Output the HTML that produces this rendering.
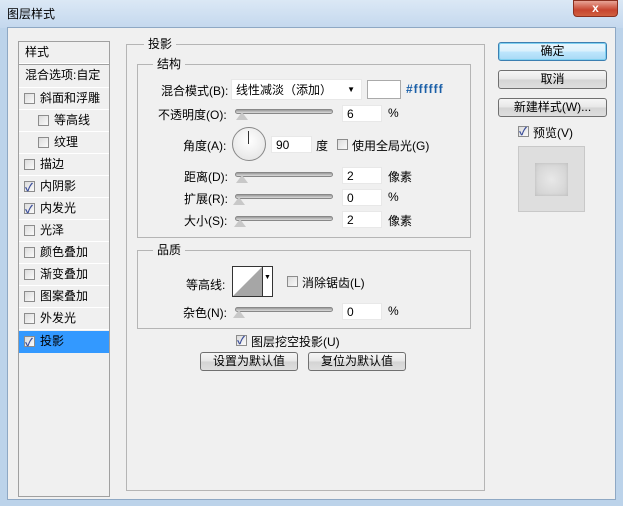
<!DOCTYPE html><html><head><meta charset="utf-8"><style>
*{margin:0;padding:0;box-sizing:border-box}
body{width:623px;height:506px;overflow:hidden;background:#bcd3ea;font-family:"Liberation Sans","Noto Sans CJK SC","WenQuanYi Zen Hei",sans-serif;font-size:12px;color:#000;position:relative}
.a{position:absolute;white-space:nowrap}
.title{left:0;top:0;width:623px;height:28px;background:linear-gradient(#dbe8f5,#c4d8ee)}
.body{left:7px;top:27px;width:609px;height:473px;background:#f0f0f0;border:1px solid #8ea8c4}
.list{left:18px;top:41px;width:92px;height:456px;border:1px solid #a0a0a0;background:#f0f0f0}
.row{position:absolute;left:0;width:90px;height:22px;border-bottom:1px solid #fff;line-height:21px}
.cb{position:absolute;width:11px;height:11px;border:1px solid #8c8c8c;background:linear-gradient(135deg,#dcdcdc,#fafafa)}
.ck:after{content:"✓";position:absolute;left:0px;top:-4px;font-size:11px;color:#3b4e9a;font-weight:bold}
.grp{border:1px solid #b5b5b5}
.lg{background:#f0f0f0;padding:0 4px;line-height:14px}
.in{background:#fff;height:17px;border:1px solid #e8e8e8;line-height:16px;padding-left:4px}
.sl{height:5px;border-radius:3px;background:linear-gradient(#9a9a9a,#dcdcdc);border:1px solid #888}
.th{width:0;height:0;border-left:6px solid transparent;border-right:6px solid transparent;border-bottom:8px solid #c8c8c8}
.btn{height:19px;border:1px solid #707070;border-radius:3px;background:linear-gradient(#f6f6f6 0,#e6e6e6 50%,#d4d4d4 51%,#dedede);text-align:center;line-height:17px;font-size:12px}
</style></head><body>
<div class="a title"></div>
<div class="a" style="left:7px;top:5px;font-size:12px">图层样式</div>
<div class="a" style="left:573px;top:0;width:45px;height:17px;border-radius:0 0 4px 4px;background:linear-gradient(#e8a496,#c7452f 60%,#d06040);border:1px solid #8a3020;color:#fff;text-align:center;font-weight:bold;font-size:12px;line-height:15px">x</div>
<div class="a body"></div>

<div class="a list">
<div class="row" style="top:0;padding-left:6px">样式</div>
<div class="row" style="top:22px;padding-left:6px;height:24px;border-top:1px solid #a0a0a0">混合选项:自定</div>
<div class="row" style="top:46px"><span class="cb" style="left:5px;top:5px"></span><span class="a" style="left:21px">斜面和浮雕</span></div>
<div class="row" style="top:68px"><span class="cb" style="left:19px;top:5px"></span><span class="a" style="left:35px">等高线</span></div>
<div class="row" style="top:90px"><span class="cb" style="left:19px;top:5px"></span><span class="a" style="left:35px">纹理</span></div>
<div class="row" style="top:112px"><span class="cb" style="left:5px;top:5px"></span><span class="a" style="left:21px">描边</span></div>
<div class="row" style="top:134px"><span class="cb ck" style="left:5px;top:5px"></span><span class="a" style="left:21px">内阴影</span></div>
<div class="row" style="top:156px"><span class="cb ck" style="left:5px;top:5px"></span><span class="a" style="left:21px">内发光</span></div>
<div class="row" style="top:178px"><span class="cb" style="left:5px;top:5px"></span><span class="a" style="left:21px">光泽</span></div>
<div class="row" style="top:200px"><span class="cb" style="left:5px;top:5px"></span><span class="a" style="left:21px">颜色叠加</span></div>
<div class="row" style="top:222px"><span class="cb" style="left:5px;top:5px"></span><span class="a" style="left:21px">渐变叠加</span></div>
<div class="row" style="top:244px"><span class="cb" style="left:5px;top:5px"></span><span class="a" style="left:21px">图案叠加</span></div>
<div class="row" style="top:266px"><span class="cb" style="left:5px;top:5px"></span><span class="a" style="left:21px">外发光</span></div>
<div class="row" style="top:289px;background:#3399ff;border:none"><span class="cb ck" style="left:5px;top:5px"></span><span class="a" style="left:21px">投影</span></div>
</div>

<div class="a grp" style="left:126px;top:44px;width:359px;height:447px"></div>
<div class="a lg" style="left:144px;top:37px">投影</div>
<div class="a grp" style="left:137px;top:64px;width:334px;height:174px"></div>
<div class="a lg" style="left:153px;top:57px">结构</div>

<div class="a" style="left:161px;top:82px">混合模式(B):</div>
<div class="a in" style="left:231px;top:79px;width:131px;height:21px;line-height:20px">线性减淡（添加）<span style="position:absolute;right:6px;font-size:8px">▼</span></div>
<div class="a in" style="left:367px;top:80px;width:34px;height:19px;border-color:#aaa"></div>
<div class="a" style="left:406px;top:82px;color:#1a5fa8;font-weight:bold;letter-spacing:1px">#ffffff</div>

<div class="a" style="left:158px;top:106px">不透明度(O):</div>
<div class="a sl" style="left:235px;top:109px;width:98px"></div><div class="a th" style="left:236px;top:112px"></div>
<div class="a in" style="left:342px;top:105px;width:40px">6</div><div class="a" style="left:388px;top:106px">%</div>

<div class="a" style="left:183px;top:137px">角度(A):</div>
<div class="a" style="left:232px;top:127px;width:34px;height:34px;border-radius:50%;border:1px solid #888;background:radial-gradient(circle at 50% 40%,#fff,#e0e0e0)"></div>
<div class="a" style="left:248px;top:131px;width:1px;height:13px;background:#333"></div>
<div class="a in" style="left:271px;top:136px;width:41px">90</div><div class="a" style="left:316px;top:137px">度</div>
<span class="a cb" style="left:337px;top:139px"></span><div class="a" style="left:352px;top:137px">使用全局光(G)</div>

<div class="a" style="left:184px;top:168px">距离(D):</div>
<div class="a sl" style="left:235px;top:172px;width:98px"></div><div class="a th" style="left:236px;top:175px"></div>
<div class="a in" style="left:342px;top:167px;width:40px">2</div><div class="a" style="left:388px;top:168px">像素</div>

<div class="a" style="left:184px;top:190px">扩展(R):</div>
<div class="a sl" style="left:235px;top:194px;width:98px"></div><div class="a th" style="left:233px;top:197px"></div>
<div class="a in" style="left:342px;top:189px;width:40px">0</div><div class="a" style="left:388px;top:190px">%</div>

<div class="a" style="left:184px;top:212px">大小(S):</div>
<div class="a sl" style="left:235px;top:216px;width:98px"></div><div class="a th" style="left:234px;top:219px"></div>
<div class="a in" style="left:342px;top:211px;width:40px">2</div><div class="a" style="left:388px;top:212px">像素</div>

<div class="a grp" style="left:137px;top:250px;width:334px;height:79px"></div>
<div class="a lg" style="left:153px;top:243px">品质</div>
<div class="a" style="left:186px;top:276px">等高线:</div>
<div class="a" style="left:232px;top:266px;width:41px;height:31px;border:1px solid #333;background:#fff">
<svg width="30" height="29" style="position:absolute;left:0;top:0"><polygon points="0,29 29,0 29,29" fill="#a6a6a6"/></svg>
<div style="position:absolute;left:29px;top:0;width:1px;height:29px;background:#333"></div>
<span style="position:absolute;left:31px;top:7px;font-size:7px">▼</span></div>
<span class="a cb" style="left:287px;top:276px"></span><div class="a" style="left:302px;top:274px">消除锯齿(L)</div>
<div class="a" style="left:183px;top:304px">杂色(N):</div>
<div class="a sl" style="left:235px;top:307px;width:98px"></div><div class="a th" style="left:233px;top:310px"></div>
<div class="a in" style="left:342px;top:303px;width:40px">0</div><div class="a" style="left:388px;top:304px">%</div>

<span class="a cb ck" style="left:236px;top:335px"></span><div class="a" style="left:251px;top:333px">图层挖空投影(U)</div>
<div class="a btn" style="left:200px;top:352px;width:98px">设置为默认值</div>
<div class="a btn" style="left:308px;top:352px;width:98px">复位为默认值</div>

<div class="a btn" style="left:498px;top:42px;width:109px;border-color:#3c7fb1;box-shadow:inset 0 0 0 1px #7fd0f0;background:linear-gradient(#eaf6fd,#d9f0fc 50%,#bee6fd 51%,#a7d9f5)">确定</div>
<div class="a btn" style="left:498px;top:70px;width:109px">取消</div>
<div class="a btn" style="left:498px;top:98px;width:109px">新建样式(W)...</div>
<span class="a cb ck" style="left:518px;top:126px"></span><div class="a" style="left:533px;top:124px">预览(V)</div>
<div class="a" style="left:518px;top:146px;width:67px;height:66px;border:1px solid #c8c8c8;background:#dedede"></div>
<div class="a" style="left:535px;top:163px;width:33px;height:33px;background:radial-gradient(#e8e8e8,#cfcfcf);box-shadow:inset 0 0 3px #bbb"></div>
</body></html>
